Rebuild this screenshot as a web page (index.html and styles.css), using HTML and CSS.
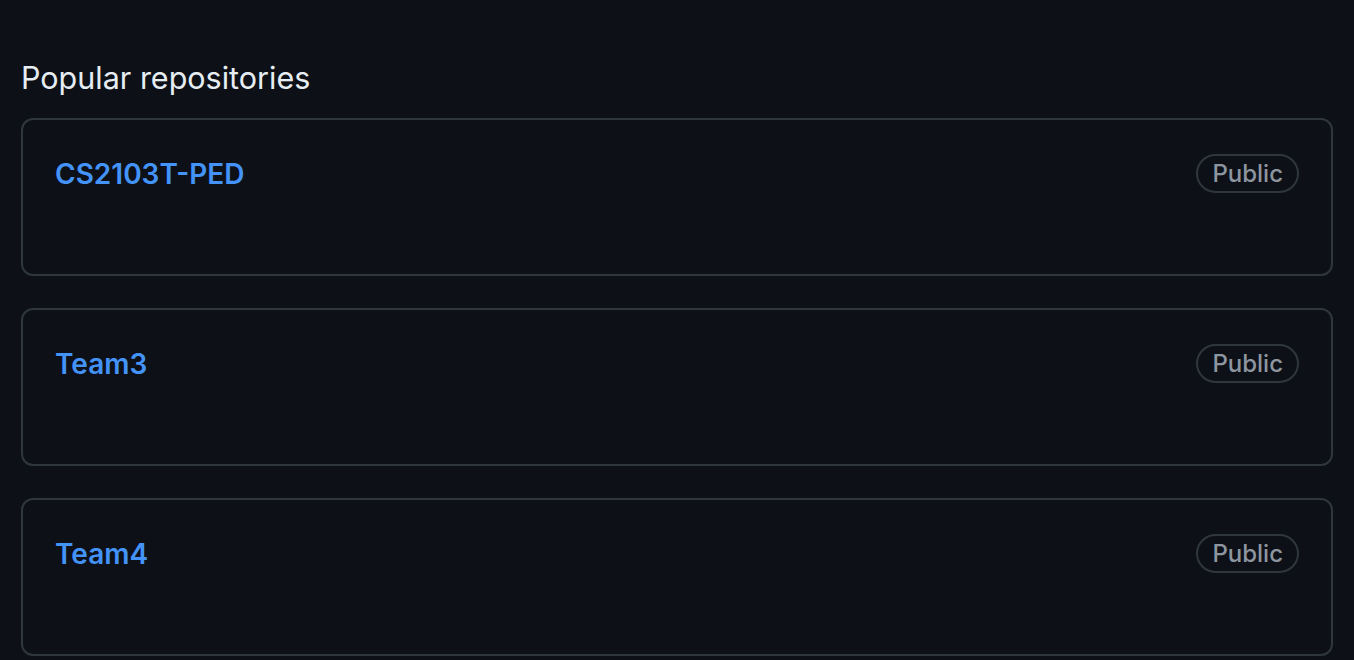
FILE: index.html
```html
<!DOCTYPE html>
<html lang="en">
<head>
    <meta charset="UTF-8">
    <meta name="viewport" content="width=device-width, initial-scale=1.0">
    <title>Popular repositories</title>
    <link rel="stylesheet" href="styles.css">
</head>
<body>
    <main class="pinned">
        <h2 class="pinned-title">Popular repositories</h2>
        <ol class="repo-list">
            <li class="repo-card">
                <a class="repo-name" href="#">CS2103T-PED</a>
                <span class="label">Public</span>
            </li>
            <li class="repo-card">
                <a class="repo-name" href="#">Team3</a>
                <span class="label">Public</span>
            </li>
            <li class="repo-card">
                <a class="repo-name" href="#">Team4</a>
                <span class="label">Public</span>
            </li>
        </ol>
    </main>
</body>
</html>
```

FILE: styles.css
```css
*{
    margin: 0;
    padding: 0;
    box-sizing: border-box;
}
body{
    background-color: #0d1117;
    font-family: Inter, "Noto Sans", sans-serif;
    color: #e6edf3;
}
.pinned{
    padding: 58px 21px 0 21px;
}
.pinned-title{
    font-size: 30.5px;
    font-weight: 400;
    line-height: 40px;
    margin-bottom: 20px;
}
.repo-list{
    list-style: none;
    display: flex;
    flex-direction: column;
    gap: 32px;
}
.repo-card{
    height: 158px;
    border: 2px solid #30363d;
    border-radius: 12px;
    padding: 32px 32px 0 32px;
    display: flex;
    justify-content: space-between;
    align-items: flex-start;
}
.repo-name{
    color: #4493f8;
    font-size: 28px;
    font-weight: 600;
    line-height: 44px;
    text-decoration: none;
}
.label{
    border: 2px solid #30363d;
    border-radius: 20px;
    color: #8d96a0;
    font-size: 24px;
    font-weight: 500;
    line-height: 34px;
    padding: 1px 14px 0 14px;
    margin-top: 2px;
}
```
